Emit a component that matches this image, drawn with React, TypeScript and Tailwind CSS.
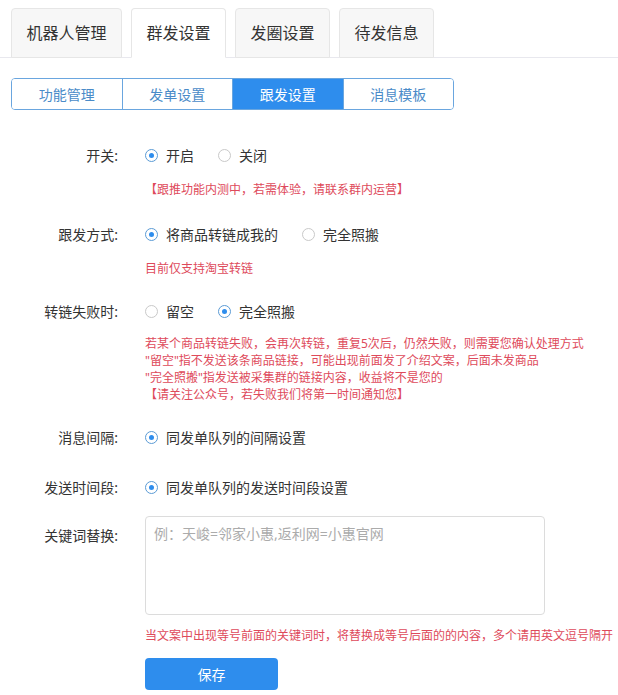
import React, { useState } from "react";

const FONT = { fontFamily: '"Noto Sans", "Noto Sans CJK SC", sans-serif' };

const TOP_TABS = ["机器人管理", "群发设置", "发圈设置", "待发信息"];
const SUB_TABS = ["功能管理", "发单设置", "跟发设置", "消息模板"];

const Radio = ({
  checked,
  label,
  onClick,
}: {
  checked: boolean;
  label: string;
  onClick?: () => void;
}) => (
  <button onClick={onClick} className="flex items-center gap-2 text-[14px] text-[#333]">
    <span
      className={`w-[13px] h-[13px] rounded-full border flex items-center justify-center bg-white ${
        checked ? "border-[#5b9bd5]" : "border-[#c9c9c9]"
      }`}
    >
      {checked ? <span className="w-[5px] h-[5px] rounded-full bg-[#2e8ded]" /> : null}
    </span>
    <span>{label}</span>
  </button>
);

const Row = ({ label, children, className = "" }: { label: string; children: React.ReactNode; className?: string }) => (
  <div className={`flex items-center h-5 ${className}`}>
    <div className="w-[107px] text-right text-[14px] text-[#333]">{label}:</div>
    <div className="ml-[27px] flex items-center gap-6">{children}</div>
  </div>
);

const Note = ({ children, className = "" }: { children: React.ReactNode; className?: string }) => (
  <div className={`ml-[134px] text-[12px] leading-[17px] text-[#de4a5b] ${className}`}>{children}</div>
);

export default function App() {
  const [topTab, setTopTab] = useState(1);
  const [subTab, setSubTab] = useState(2);
  const [enabled, setEnabled] = useState(true);
  const [mode, setMode] = useState(0);
  const [fail, setFail] = useState(1);

  return (
    <div className="w-[618px] h-[695px] bg-white overflow-hidden" style={FONT}>
      <div className="pt-2 border-b border-[#e8e8ee]">
        <div className="flex gap-[9px] pl-[11px]">
          {TOP_TABS.map((t, i) => (
            <button
              key={t}
              onClick={() => setTopTab(i)}
              className={`h-[50px] rounded-t-[4px] border border-[#e6e6e6] text-[16px] text-[#333] -mb-px ${
                i === 0 ? "w-[111px]" : "w-[95px]"
              } ${topTab === i ? "bg-white border-b-white" : "bg-[#f7f7f7]"}`}
            >
              {t}
            </button>
          ))}
        </div>
      </div>

      <div className="pl-[11px] pt-5">
        <div className="flex w-[443px] h-8 border border-[#6aa6df] rounded-[4px] overflow-hidden">
          {SUB_TABS.map((t, i) => (
            <button
              key={t}
              onClick={() => setSubTab(i)}
              className={`flex-1 text-[14px] ${i > 0 ? "border-l border-[#6aa6df]" : ""} ${
                subTab === i ? "bg-[#2e8ded] text-white" : "bg-white text-[#4a8bc8]"
              }`}
            >
              {t}
            </button>
          ))}
        </div>
      </div>

      <div className="pl-[11px]">
        <Row label="开关" className="mt-[35px]">
          <Radio checked={enabled} label="开启" onClick={() => setEnabled(true)} />
          <Radio checked={!enabled} label="关闭" onClick={() => setEnabled(false)} />
        </Row>
        <Note className="mt-4">【跟推功能内测中，若需体验，请联系群内运营】</Note>

        <Row label="跟发方式" className="mt-[26px]">
          <Radio checked={mode === 0} label="将商品转链成我的" onClick={() => setMode(0)} />
          <Radio checked={mode === 1} label="完全照搬" onClick={() => setMode(1)} />
        </Row>
        <Note className="mt-4">目前仅支持淘宝转链</Note>

        <Row label="转链失败时" className="mt-6">
          <Radio checked={fail === 0} label="留空" onClick={() => setFail(0)} />
          <Radio checked={fail === 1} label="完全照搬" onClick={() => setFail(1)} />
        </Row>
        <Note className="mt-[14px]">
          <div>若某个商品转链失败，会再次转链，重复5次后，仍然失败，则需要您确认处理方式</div>
          <div>"留空"指不发送该条商品链接，可能出现前面发了介绍文案，后面未发商品</div>
          <div>"完全照搬"指发送被采集群的链接内容，收益将不是您的</div>
          <div>【请关注公众号，若失败我们将第一时间通知您】</div>
        </Note>

        <Row label="消息间隔" className="mt-6">
          <Radio checked label="同发单队列的间隔设置" />
        </Row>

        <Row label="发送时间段" className="mt-[30px]">
          <Radio checked label="同发单队列的发送时间段设置" />
        </Row>

        <div className="flex mt-[19px]">
          <div className="w-[107px] text-right text-[14px] text-[#333] pt-[9px]">关键词替换:</div>
          <textarea
            placeholder="例：天峻=邻家小惠,返利网=小惠官网"
            className="ml-[27px] w-[400px] h-[99px] border border-[#dcdcdc] rounded-[4px] px-2 py-[6px] text-[14px] text-[#333] placeholder:text-[#ababab] resize-none outline-none"
            style={FONT}
          />
        </div>
        <Note className="mt-3">当文案中出现等号前面的关键词时，将替换成等号后面的的内容，多个请用英文逗号隔开</Note>

        <button className="ml-[134px] mt-[14px] w-[133px] h-8 rounded-[4px] bg-[#2e8ded] text-white text-[14px]">
          保存
        </button>
      </div>
    </div>
  );
}
